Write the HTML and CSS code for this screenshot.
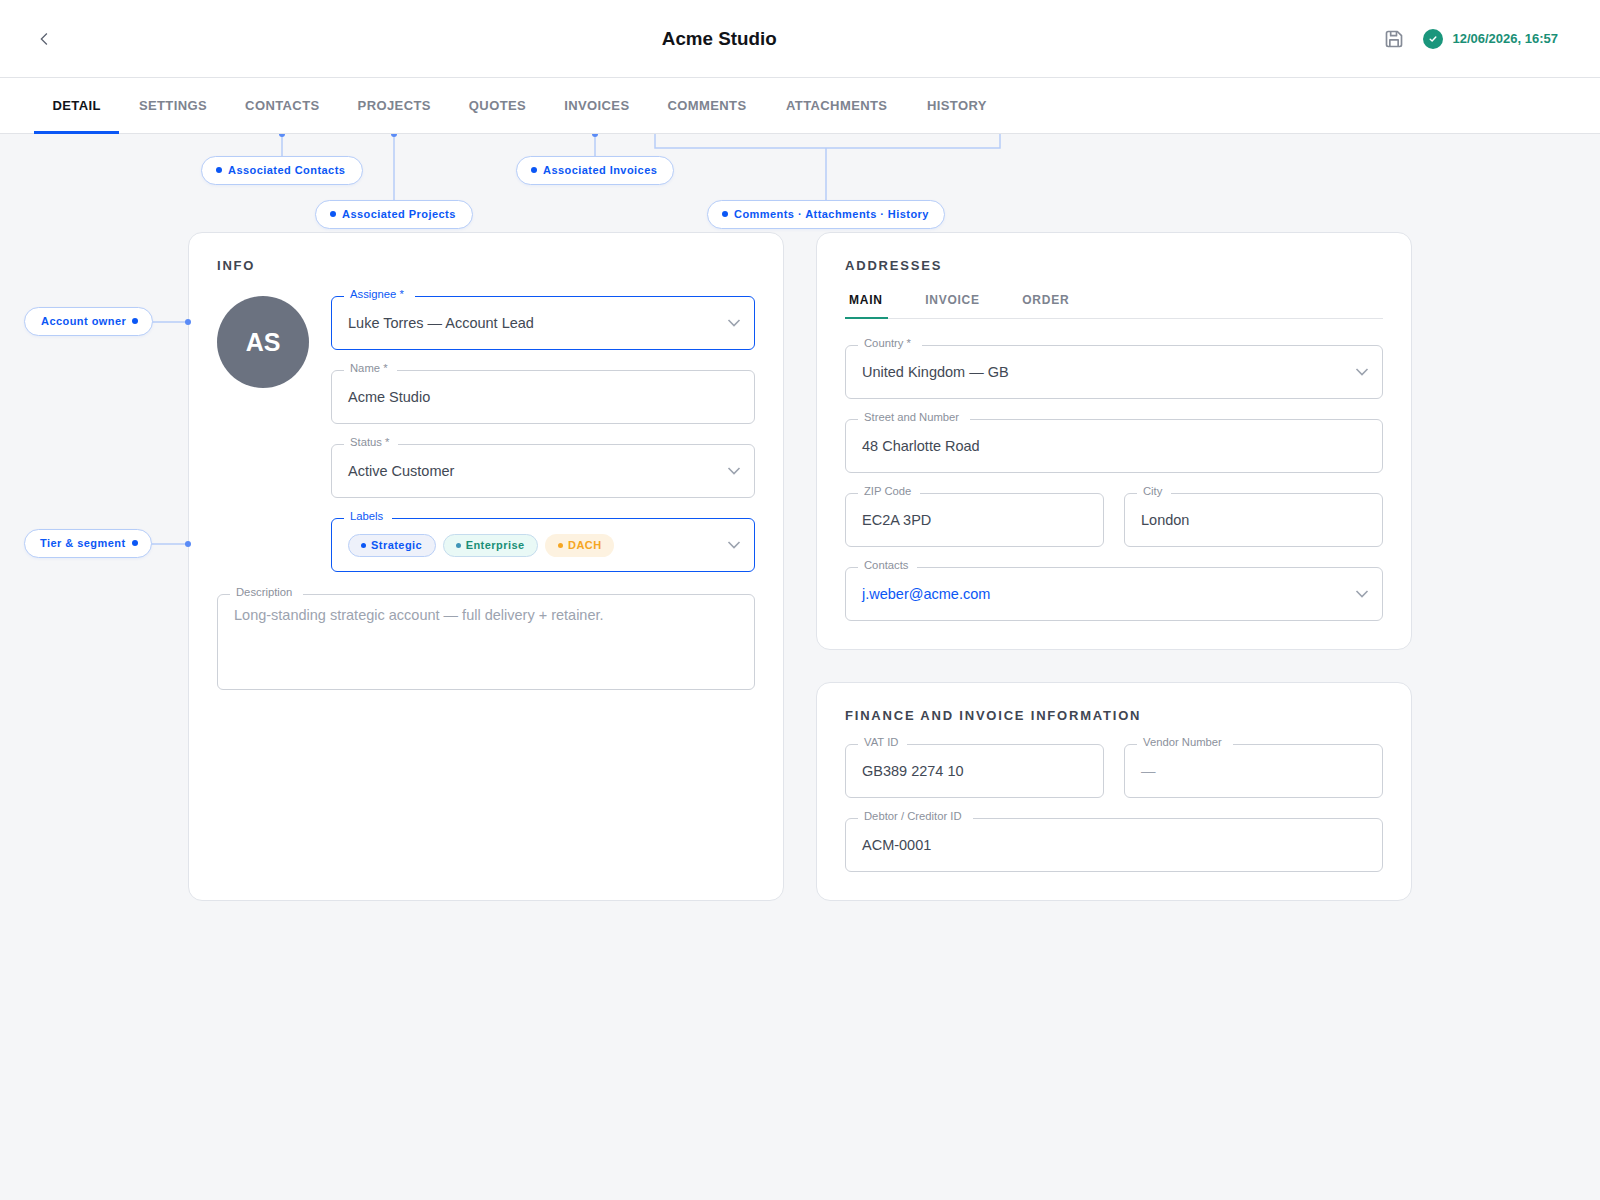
FILE: index.html
```html
<!DOCTYPE html>
<html lang="en">
<head>
    <meta charset="UTF-8">
    <title>Acme Studio</title>
    <link rel="stylesheet" href="styles.css">
</head>
<body>

    <!-- top bar -->
    <header class="topbar">
        <button class="back-btn" type="button" aria-label="Back">
            <svg width="24" height="24" viewBox="0 0 24 24" fill="none" stroke="#5b6270" stroke-width="1.6"><path d="M15 5l-7 7 7 7"/></svg>
        </button>
        <h1 class="topbar-title">Acme Studio</h1>
        <div class="topbar-right">
            <svg width="20" height="20" viewBox="0 0 24 24" fill="none" stroke="#858b97" stroke-width="2" stroke-linejoin="round"><path d="M19 21H5a2 2 0 0 1-2-2V5a2 2 0 0 1 2-2h11l5 5v11a2 2 0 0 1-2 2z"/><path d="M17 21v-8H7v8"/><path d="M8 3v5h7V3"/></svg>
            <span class="saved-badge">
                <svg width="8" height="8" viewBox="0 0 10 10" fill="none" stroke="#fff" stroke-width="1.8" stroke-linecap="round" stroke-linejoin="round"><path d="M1.5 5.3l2.4 2.2 4.6-5"/></svg>
            </span>
            <span class="saved-time">12/06/2026, 16:57</span>
        </div>
    </header>

    <!-- main tabs -->
    <nav class="tabs">
        <a class="tab active">DETAIL</a>
        <a class="tab">SETTINGS</a>
        <a class="tab">CONTACTS</a>
        <a class="tab">PROJECTS</a>
        <a class="tab">QUOTES</a>
        <a class="tab">INVOICES</a>
        <a class="tab">COMMENTS</a>
        <a class="tab">ATTACHMENTS</a>
        <a class="tab">HISTORY</a>
    </nav>

    <main class="content">
        <!-- annotation lines, drawn on the canvas of the page -->
        <svg class="wires" width="1600" height="500" fill="none">
            <g stroke="#b6cdf8" stroke-width="1.5">
                <path d="M282 0V22"/>
                <path d="M394 0V66"/>
                <path d="M595 0V22"/>
                <path d="M655 0V14H1000V0"/>
                <path d="M826 14V66"/>
                <path d="M150 188H188"/>
                <path d="M150 410H188"/>
            </g>
            <g fill="#5a8bf6">
                <circle cx="282" cy="0" r="3"/>
                <circle cx="394" cy="0" r="3"/>
                <circle cx="595" cy="0" r="3"/>
                <circle cx="188" cy="188" r="3"/>
                <circle cx="188" cy="410" r="3"/>
            </g>
        </svg>

        <span class="callout callout-contacts"><i class="dot"></i>Associated Contacts</span>
        <span class="callout callout-projects"><i class="dot"></i>Associated Projects</span>
        <span class="callout callout-invoices"><i class="dot"></i>Associated Invoices</span>
        <span class="callout callout-history"><i class="dot"></i>Comments · Attachments · History</span>
        <span class="callout callout-side callout-owner">Account owner<i class="dot"></i></span>
        <span class="callout callout-side callout-tier">Tier &amp; segment<i class="dot"></i></span>

        <div class="columns">
            <section class="card">
                <h2 class="card-title info-title">INFO</h2>
                <div class="info-row">
                    <div class="avatar">AS</div>
                    <div class="field-stack">
                        <div class="field focus">
                            <label class="field-label wide">Assignee *</label>
                            <span class="field-value">Luke Torres — Account Lead</span>
                            <svg class="chevron" width="14" height="8" viewBox="0 0 14 8" fill="none" stroke="#9ca3af" stroke-width="1.6"><path d="M1.5 1l5.5 5.5L12.5 1"/></svg>
                        </div>
                        <div class="field">
                            <label class="field-label">Name *</label>
                            <span class="field-value">Acme Studio</span>
                        </div>
                        <div class="field">
                            <label class="field-label">Status *</label>
                            <span class="field-value">Active Customer</span>
                            <svg class="chevron" width="14" height="8" viewBox="0 0 14 8" fill="none" stroke="#9ca3af" stroke-width="1.6"><path d="M1.5 1l5.5 5.5L12.5 1"/></svg>
                        </div>
                        <div class="field focus">
                            <label class="field-label">Labels</label>
                            <div class="chips">
                                <span class="chip chip-blue"><i class="chip-dot"></i>Strategic</span>
                                <span class="chip chip-teal"><i class="chip-dot"></i>Enterprise</span>
                                <span class="chip chip-amber"><i class="chip-dot"></i>DACH</span>
                            </div>
                            <svg class="chevron" width="14" height="8" viewBox="0 0 14 8" fill="none" stroke="#9ca3af" stroke-width="1.6"><path d="M1.5 1l5.5 5.5L12.5 1"/></svg>
                        </div>
                    </div>
                </div>
                <div class="field field-area">
                    <label class="field-label wide">Description</label>
                    <span class="field-value placeholder">Long-standing strategic account — full delivery + retainer.</span>
                </div>
            </section>

            <div class="right-col">
                <section class="card">
                    <h2 class="card-title">ADDRESSES</h2>
                    <div class="subtabs">
                        <a class="subtab active">MAIN</a>
                        <a class="subtab">INVOICE</a>
                        <a class="subtab">ORDER</a>
                    </div>
                    <div class="field-stack">
                        <div class="field">
                            <label class="field-label wide">Country *</label>
                            <span class="field-value">United Kingdom — GB</span>
                            <svg class="chevron" width="14" height="8" viewBox="0 0 14 8" fill="none" stroke="#9ca3af" stroke-width="1.6"><path d="M1.5 1l5.5 5.5L12.5 1"/></svg>
                        </div>
                        <div class="field">
                            <label class="field-label wide">Street and Number</label>
                            <span class="field-value">48 Charlotte Road</span>
                        </div>
                        <div class="field-pair">
                            <div class="field">
                                <label class="field-label">ZIP Code</label>
                                <span class="field-value">EC2A 3PD</span>
                            </div>
                            <div class="field">
                                <label class="field-label">City</label>
                                <span class="field-value">London</span>
                            </div>
                        </div>
                        <div class="field">
                            <label class="field-label">Contacts</label>
                            <span class="field-value link">j.weber@acme.com</span>
                            <svg class="chevron" width="14" height="8" viewBox="0 0 14 8" fill="none" stroke="#9ca3af" stroke-width="1.6"><path d="M1.5 1l5.5 5.5L12.5 1"/></svg>
                        </div>
                    </div>
                </section>

                <section class="card">
                    <h2 class="card-title finance-title">FINANCE AND INVOICE INFORMATION</h2>
                    <div class="field-stack">
                        <div class="field-pair">
                            <div class="field">
                                <label class="field-label">VAT ID</label>
                                <span class="field-value">GB389 2274 10</span>
                            </div>
                            <div class="field">
                                <label class="field-label wide">Vendor Number</label>
                                <span class="field-value placeholder">—</span>
                            </div>
                        </div>
                        <div class="field">
                            <label class="field-label wide">Debtor / Creditor ID</label>
                            <span class="field-value">ACM-0001</span>
                        </div>
                    </div>
                </section>
            </div>
        </div>
    </main>

</body>
</html>
```

FILE: styles.css
```css
* {
    box-sizing: border-box;
}

body {
    font-family: "Liberation Sans", Arial, sans-serif;
    background-color: #f5f6f8;
    margin: 0;
    color: #424955;
    min-height: 100vh;
}

/* top bar */
.topbar {
    display: flex;
    align-items: center;
    justify-content: space-between;
    height: 78px;
    padding: 0 42px 0 35px;
    background-color: #fff;
    border-bottom: 1px solid #e2e4e8;
}

.back-btn {
    display: flex;
    width: 19px;
    height: 24px;
    padding: 0;
    border: none;
    background: none;
}

.topbar-title {
    margin: 0;
    font-size: 18.8px;
    font-weight: bold;
    color: #111318;
}

.topbar-right {
    display: flex;
    align-items: center;
}

.saved-badge {
    display: flex;
    align-items: center;
    justify-content: center;
    width: 20px;
    height: 20px;
    margin-left: 19px;
    border-radius: 50%;
    background-color: #1a967c;
}

.saved-time {
    margin-left: 9px;
    font-size: 13px;
    font-weight: bold;
    color: #1a8f76;
}

/* main tabs */
.tabs {
    display: flex;
    gap: 1px;
    height: 56px;
    padding-left: 34px;
    background-color: #fff;
    border-bottom: 1px solid #e2e4e8;
}

.tab {
    display: flex;
    align-items: center;
    padding: 2px 18.5px 0;
    margin-bottom: -1px;
    font-size: 13px;
    font-weight: bold;
    letter-spacing: 0.4px;
    color: #7d838f;
    border-bottom: 3px solid transparent;
}

.tab:nth-child(n+8) {
    margin-left: 1.5px;
}

.tab.active {
    color: #111318;
    border-bottom-color: #0b57f5;
}

/* page body */
.content {
    position: relative;
    padding-top: 98px;
    padding-bottom: 60px;
}

.wires {
    position: absolute;
    top: 0;
    left: 0;
}

.callout {
    position: absolute;
    display: flex;
    align-items: center;
    gap: 6px;
    height: 29px;
    padding: 0 15px 1px 14px;
    background-color: #fff;
    border: 1.5px solid #b6cdf8;
    border-radius: 15px;
    box-shadow: 0 1px 3px rgba(11, 87, 245, 0.06);
    font-size: 11px;
    font-weight: bold;
    letter-spacing: 0.45px;
    color: #0b57f5;
    white-space: nowrap;
}

.callout-side {
    padding: 0 13px 1px 15px;
}

.dot {
    width: 6px;
    height: 6px;
    border-radius: 50%;
    background-color: #0b57f5;
}

.callout-contacts { left: 201px; top: 22px; padding-right: 16.5px; }
.callout-projects { left: 315px; top: 66px; padding-right: 16px; }
.callout-invoices { left: 516px; top: 22px; padding-right: 16px; }
.callout-history { left: 707px; top: 66px; }
.callout-owner { left: 24px; top: 173px; padding-left: 16px; padding-right: 14px; }
.callout-tier { left: 24px; top: 395px; }

.columns {
    display: grid;
    grid-template-columns: 596px 596px;
    gap: 32px;
    width: 1224px;
    margin: 0 auto;
}

.right-col {
    display: flex;
    flex-direction: column;
    gap: 32px;
}

.card {
    padding: 25px 28px 28px;
    background-color: #fff;
    border: 1px solid #e1e4ea;
    border-radius: 14px;
}

.card-title {
    margin: 0;
    font-size: 13px;
    line-height: 16px;
    font-weight: bold;
    letter-spacing: 1.8px;
    color: #3f4652;
}

.info-title {
    margin-bottom: 22px;
}

.finance-title {
    margin-bottom: 20px;
}

.info-row {
    display: flex;
    gap: 22px;
}

.avatar {
    display: flex;
    align-items: center;
    justify-content: center;
    flex: none;
    width: 92px;
    height: 92px;
    border-radius: 50%;
    background-color: #6b7280;
    color: #fff;
    font-size: 25px;
    font-weight: bold;
}

.field-stack {
    display: flex;
    flex-direction: column;
    gap: 20px;
    flex: 1;
}

.field-pair {
    display: grid;
    grid-template-columns: 1fr 1fr;
    gap: 20px;
}

.field {
    position: relative;
    display: flex;
    align-items: center;
    justify-content: space-between;
    height: 54px;
    padding: 0 13px 0 16px;
    border: 1px solid #cdd1d8;
    border-radius: 6px;
}

.field.focus {
    border-color: #0b57f5;
}

.field-area {
    align-items: flex-start;
    height: 96px;
    margin-top: 22px;
    padding-top: 12px;
}

.field-label {
    position: absolute;
    top: -10px;
    left: 12px;
    padding: 0 9px 0 6px;
    background-color: #fff;
    font-size: 11.25px;
    line-height: 14px;
    color: #8b919c;
}

.field-label.wide {
    padding-right: 11px;
}

.field.focus .field-label {
    color: #0b57f5;
}

.field-value {
    font-size: 14.5px;
    color: #424955;
}

.field-value.placeholder {
    color: #9ca3af;
}

.field-value.link {
    color: #0b57f5;
}

.chevron {
    flex: none;
}

/* labels */
.chips {
    display: flex;
    gap: 7px;
}

.chip {
    display: flex;
    align-items: center;
    gap: 5px;
    height: 23px;
    padding: 0 12.5px 0 12px;
    border: 1px solid transparent;
    border-radius: 12px;
    font-size: 11px;
    font-weight: bold;
    letter-spacing: 0.45px;
}

.chip-dot {
    width: 5px;
    height: 5px;
    border-radius: 50%;
}

.chip-blue {
    background-color: #eef1fa;
    border-color: #b9cff7;
    color: #0b57f5;
}

.chip-blue .chip-dot {
    background-color: #0b57f5;
}

.chip-teal {
    background-color: #e9f9f6;
    border-color: #c5dcee;
    color: #1a8f76;
}

.chip-teal .chip-dot {
    background-color: #3f95b8;
}

.chip-amber {
    background-color: #fdf2e0;
    color: #f5a623;
    padding-right: 11.5px;
}

.chip-amber .chip-dot {
    background-color: #f5a623;
}

/* address tabs */
.subtabs {
    display: flex;
    gap: 33.5px;
    margin: 8px 0 26px;
    border-bottom: 1px solid #e2e4e8;
}

.subtab {
    padding: 11px 5px 10px 4px;
    margin-bottom: -1px;
    font-size: 12px;
    line-height: 14px;
    font-weight: bold;
    letter-spacing: 0.75px;
    color: #7d838f;
    border-bottom: 2px solid transparent;
}

.subtab.active {
    color: #111318;
    border-bottom-color: #1a967c;
}
```
